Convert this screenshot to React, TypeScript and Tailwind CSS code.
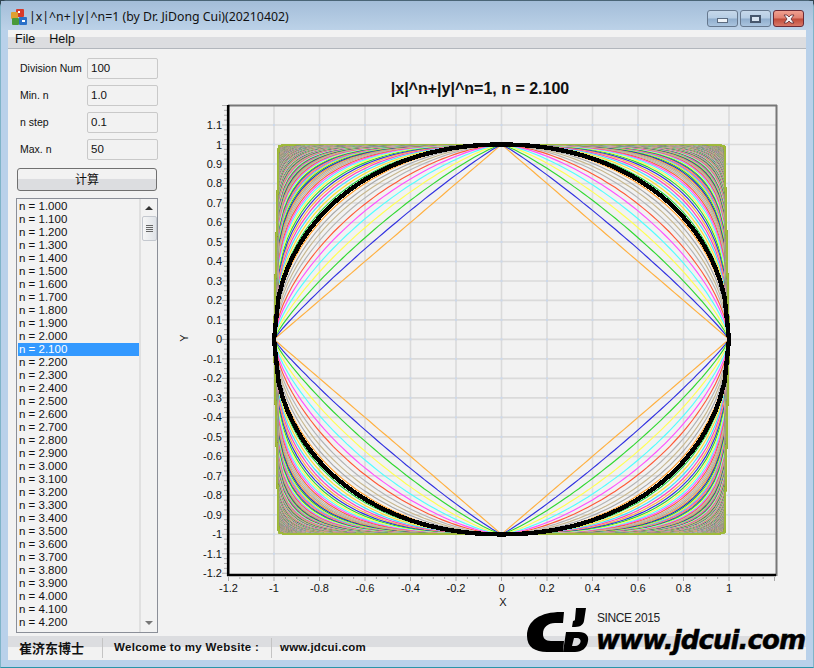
import { useMemo } from 'react';

const sans = 'font-["Liberation_Sans",Arial,sans-serif]';

const palette = [
  '#ffb040', '#3030e0', '#30d830', '#ffff50', '#50ffff', '#ff50ff', '#ff5a38', '#b4b4b4',
  '#c8b890', '#a8a8a8', '#ffa030', '#2020d0', '#20c840', '#ffe030', '#40e0ff', '#ff40c0',
];

const X0 = 501.5;
const XU = 227.5;
const Y0 = 339.4;
const YU = 194.9;

const xMajor = [-1.2, -1, -0.8, -0.6, -0.4, -0.2, 0, 0.2, 0.4, 0.6, 0.8, 1];
const yLabels = Array.from({ length: 24 }, (_, i) => Math.round((-1.2 + i * 0.1) * 10) / 10);

const px = (x: number) => X0 + x * XU;
const py = (y: number) => Y0 - y * YU;

// one closed curve, all four quadrants. Division Num 100 = 50 steps per quadrant
function curvePath(n: number, div: number) {
  const pts: [number, number][] = [];
  for (let i = 0; i <= div; i++) {
    const x = i / div;
    const y = Math.pow(Math.max(0, 1 - Math.pow(x, n)), 1 / n);
    pts.push([x, y]);
  }
  const seg = (sx: number, sy: number, rev: boolean) => {
    const list = rev ? [...pts].reverse() : pts;
    return list.map(([x, y]) => `${px(sx * x).toFixed(1)} ${py(sy * y).toFixed(1)}`).join('L');
  };
  return `M${seg(1, 1, false)}L${seg(1, -1, true)}L${seg(-1, -1, false)}L${seg(-1, 1, true)}Z`;
}

function Chart() {
  const curves = useMemo(() => {
    const out: { d: string; color: string }[] = [];
    for (let i = 0; i <= 490; i++) {
      const n = 1 + i * 0.1;
      out.push({ d: curvePath(n, 50), color: i >= 430 ? '#9fba3c' : palette[i % palette.length] });
    }
    return out;
  }, []);
  const selected = useMemo(() => curvePath(2.1, 50), []);

  const xMinor: number[] = [];
  for (let i = 0; i <= 48; i++) xMinor.push(228.5 + i * (XU * 0.05));
  const yMinor: number[] = [];
  for (let i = 0; i <= 96; i++) yMinor.push(105.5 + i * (YU * 0.025));

  return (
    <svg viewBox="170 49 636 587" className="w-[636px] h-[587px] shrink-0" fontFamily="'Liberation Sans', Arial, sans-serif">
      <text x="480" y="94" textAnchor="middle" fontSize="16" fontWeight="700" fill="#111">
        |x|^n+|y|^n=1, n = 2.100
      </text>

      {xMajor.slice(1).map((v) => (
        <line key={v} x1={px(v)} x2={px(v)} y1="106" y2="574" stroke="#dadada" strokeWidth="1.6" />
      ))}
      {yLabels.slice(1).map((v) => (
        <line key={v} x1="229" x2="776" y1={py(v)} y2={py(v)} stroke="#dadada" strokeWidth="1.6" />
      ))}
      {xMajor.slice(1).map((x) =>
        yLabels.slice(1).map((y) => (
          <rect key={`${x}_${y}`} x={px(x) - 1} y={py(y) - 1} width="2" height="2" fill="#ccd8ea" />
        )),
      )}

      <g fill="none" strokeWidth="1.15">
        {curves.map((c, i) => (
          <path key={i} d={c.d} stroke={c.color} />
        ))}
      </g>
      <path d={selected} fill="none" stroke="#000" strokeWidth="4.4" shapeRendering="crispEdges" />

      {yMinor.map((y, i) => (
        <line key={y} x1={i % 4 === 0 ? 222 : 224} x2="227" y1={y} y2={y} stroke="#b0b0b0" strokeWidth="1" />
      ))}
      {xMinor.map((x, i) => (
        <line key={x} x1={x} x2={x} y1="577" y2={i % 4 === 0 ? 581 : 579} stroke="#a8a8a8" strokeWidth="1" />
      ))}

      <line x1="228" x2="777" y1="105.5" y2="105.5" stroke="#777" strokeWidth="2" />
      <line x1="776.5" x2="776.5" y1="105" y2="576" stroke="#777" strokeWidth="2" />
      <line x1="228.2" x2="228.2" y1="105" y2="576" stroke="#000" strokeWidth="2.6" />
      <line x1="227" x2="776" y1="575" y2="575" stroke="#000" strokeWidth="2.6" />

      <g fontSize="11" fill="#111">
        {xMajor.map((v) => (
          <text key={v} x={px(v)} y="592" textAnchor="middle">
            {v}
          </text>
        ))}
        {yLabels.map((v) => (
          <text key={v} x="222" y={py(v) + 4} textAnchor="end">
            {v}
          </text>
        ))}
        <text x="503" y="606" textAnchor="middle">
          X
        </text>
        <text x="0" y="0" textAnchor="middle" transform="translate(188 338) rotate(-90)">
          Y
        </text>
      </g>
    </svg>
  );
}

function WinButton({ kind }: { kind: 'min' | 'max' | 'close' }) {
  const skin =
    kind === 'close'
      ? 'border-[#6b2a35] bg-[linear-gradient(#f0a090_0%,#e08070_48%,#c04a38_52%,#d87868_100%)]'
      : 'border-[#66788e] bg-[linear-gradient(#c6d8ea_0%,#b6cde4_48%,#8fadcc_52%,#aac4de_100%)]';
  return (
    <div className={`w-[31px] h-[17px] rounded-[3px] border flex items-center justify-center ${skin}`}>
      {kind === 'min' && <div className="w-[11px] h-[5px] mt-[3px] bg-[#eef3f8] border border-[#5b6b80]" />}
      {kind === 'max' && (
        <div className="w-[11px] h-[8px] bg-[#d8e4f0] border-2 border-[#46566c] flex items-center justify-center" />
      )}
      {kind === 'close' && (
        <svg width="12" height="10" viewBox="0 0 12 10">
          <path d="M1 1h3l2 2 2-2h3L8 5l3 4H8L6 7 4 9H1l3-4z" fill="#f4f4f8" stroke="#5a2a30" strokeWidth="0.8" />
        </svg>
      )}
    </div>
  );
}

function AppIcon() {
  return (
    <svg width="18" height="18" viewBox="0 0 18 18" className="shrink-0">
      <rect x="6" y="1" width="8" height="8" rx="1" fill="#d83a2a" />
      <rect x="1" y="4" width="7" height="7" rx="1" fill="#e0a030" />
      <rect x="2" y="10" width="7" height="7" rx="1" fill="#4a9a3a" />
      <rect x="9" y="9" width="8" height="8" rx="1" fill="#2a70c8" />
      <rect x="8" y="3" width="2" height="2" fill="#fff" />
      <rect x="12" y="12" width="3" height="2" fill="#fff" />
    </svg>
  );
}

function Field({ label, value }: { label: string; value: string }) {
  return (
    <div className="flex items-center h-[21px]">
      <div className="w-[71px] pl-[4px] text-[10.5px] text-[#111] whitespace-nowrap">{label}</div>
      <div className="w-[71px] h-[21px] flex items-center pl-[3px] border border-[#c9c9c9] rounded-[2px] text-[11.5px] text-[#111]">
        {value}
      </div>
    </div>
  );
}

function ListBox() {
  const rows = Array.from({ length: 33 }, (_, i) => (1 + i * 0.1).toFixed(3));
  return (
    <div className="mt-[7px] w-[142px] h-[435px] border border-[#8b8f98] flex overflow-hidden">
      <div className="flex-1 pt-[1px] pl-[1px] overflow-hidden">
        {rows.map((r, i) => (
          <div
            key={r}
            className={`h-[13px] leading-[13px] pl-[1px] text-[11.5px] ${i === 11 ? 'bg-[#3399ff] text-white' : 'text-[#111]'}`}
          >
            n = {r}
          </div>
        ))}
      </div>
      <div className="w-[18px] shrink-0 border-l-2 border-[#e0e0e0] flex flex-col items-center">
        <div className="mt-[7px] w-0 h-0 border-x-[4px] border-x-transparent border-b-[4px] border-b-[#333]" />
        <div className="mt-[6px] w-[15px] h-[25px] rounded-[2px] border border-[#c4c8cf] bg-[linear-gradient(90deg,#f6f6f6,#dfe3e8)] flex flex-col items-center justify-center gap-[1px]">
          <div className="w-[7px] h-[1px] bg-[#666]" />
          <div className="w-[7px] h-[1px] bg-[#666]" />
          <div className="w-[7px] h-[1px] bg-[#666]" />
          <div className="w-[7px] h-[1px] bg-[#666]" />
        </div>
        <div className="mt-auto mb-[7px] w-0 h-0 border-x-[4px] border-x-transparent border-t-[4px] border-t-[#777]" />
      </div>
    </div>
  );
}

function Logo() {
  return (
    <div className="absolute left-[527px] top-[606px] w-[287px] h-[50px]">
      <svg width="62" height="48" viewBox="0 0 62 48" className="absolute left-0 top-0">
        <path d="M34 6 C14 6 0 14 0 30 C0 41 8 46 20 46 L36 46 L37 35 L24 35 C18 35 16 32 16 28 C16 21 21 17 28 17 L36 17 L37 6 Z" fill="#000" />
        <path d="M49 2 L59 2 L57 15 C56 20 52 21 46 21 L45 21 L46 15 C47.5 15 48 14 48 13 Z" fill="#000" />
        <path fillRule="evenodd" d="M39 26 L52 26 C59 26 62 30 61 35 C60 42 55 46 48 46 L36 46 Z M47 32 L45 40 L48 40 C51 40 53 38 53.5 36 C54 34 52.5 32 50 32 Z" fill="#000" />
      </svg>
      <div className={`absolute left-[70px] top-[5px] leading-[14px] whitespace-nowrap text-[12px] tracking-[-0.4px] text-[#222] ${sans}`}>
        SINCE 2015
      </div>
      <div className='absolute left-[69px] top-[19px] leading-[30px] whitespace-nowrap text-[26px] font-bold italic tracking-[-0.9px] text-black [-webkit-text-stroke:0.5px_black] font-["DejaVu_Sans",sans-serif]'>
        www.jdcui.com
      </div>
    </div>
  );
}

export default function App() {
  return (
    <div className={`relative w-[814px] h-[668px] overflow-hidden bg-[#2f4450] ${sans}`}>
      <div className="w-[814px] h-[668px] flex flex-col rounded-t-[7px] border-t border-x border-b border-t-[#4a6576] border-x-[#7fb4c8] border-b-[#2a94a8] bg-[#b9d1ea]">
        <div className="h-[29px] shrink-0 flex items-start justify-between bg-[linear-gradient(#a3bdd8,#bcd2e8)] pr-[9px]">
          <div className="flex items-center pt-[7px] pl-[9px] gap-[1px]">
            <AppIcon />
            <span className='text-[12.3px] text-[#111] whitespace-nowrap font-["Noto_Sans",sans-serif]'>
              |x|^n+|y|^n=1 (by Dr. JiDong Cui)(20210402)
            </span>
          </div>
          <div className="flex gap-[2px] pt-[9px]">
            <WinButton kind="min" />
            <WinButton kind="max" />
            <WinButton kind="close" />
          </div>
        </div>

        <div className="flex-1 mx-[7px] mb-[7px] bg-[#f2f2f2] flex flex-col min-h-0">
          <div className="h-[19px] shrink-0 flex items-center gap-[14px] pl-[7px] text-[12.5px] text-[#111] border-b border-[#b2b6bc] bg-[linear-gradient(#f2f2f2_0%,#f2f2f2_38%,#dcdde0_40%,#dcdde0_100%)]">
            <span>File</span>
            <span>Help</span>
          </div>

          <div className="h-[587px] shrink-0 flex">
            <div className="w-[162px] shrink-0 pl-[8px] pt-[9px]">
              <div className="flex flex-col gap-[6px]">
                <Field label="Division Num" value="100" />
                <Field label="Min. n" value="1.0" />
                <Field label="n step" value="0.1" />
                <Field label="Max. n" value="50" />
              </div>
              <div className='mt-[8px] ml-[1px] w-[140px] h-[23px] rounded-[3px] border border-[#707070] bg-[linear-gradient(#f2f2f2_0%,#f2f2f2_45%,#dcdde0_50%,#dcdde0_100%)] flex items-center justify-center pb-[1px] text-[12px] text-[#111] font-["Noto_Sans_CJK_SC",sans-serif]'>
                计算
              </div>
              <ListBox />
            </div>
            <Chart />
          </div>

          <div className="flex-1 flex items-center bg-[linear-gradient(#dcdde0_0%,#dcdde0_46%,#f2f2f2_48%,#f2f2f2_100%)] font-bold text-[#111]">
            <div className='w-[94px] pl-[11px] text-[13px] font-["Noto_Sans_CJK_SC",sans-serif]'>崔济东博士</div>
            <div className="w-px h-[20px] bg-[#c4c4c4]" />
            <div className="w-[168px] pl-[11px] text-[11.5px] tracking-[0.3px] whitespace-nowrap">Welcome to my Website :</div>
            <div className="w-px h-[20px] bg-[#c4c4c4]" />
            <div className="pl-[8px] text-[11.5px] tracking-[0.2px]">www.jdcui.com</div>
          </div>
        </div>
      </div>
      <Logo />
    </div>
  );
}
